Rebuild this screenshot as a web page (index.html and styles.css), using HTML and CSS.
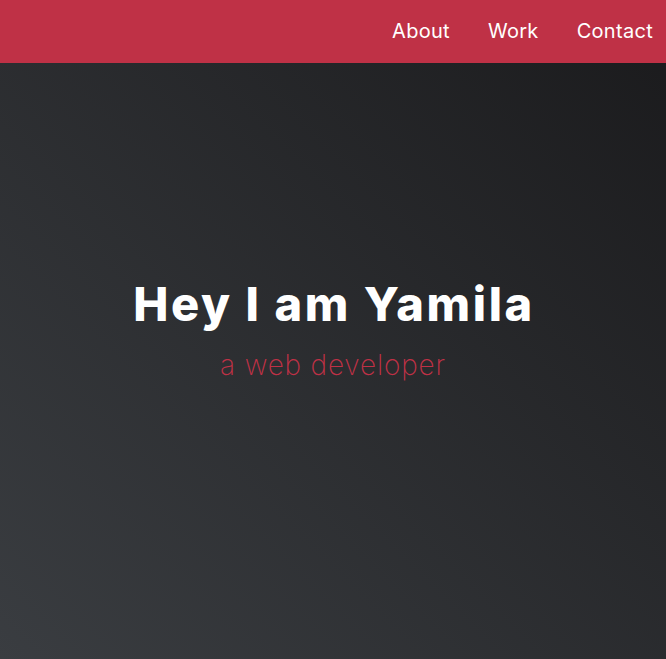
FILE: index.html
```html
<!DOCTYPE html>
<html lang="en">
<head>
<meta charset="utf-8">
<title>Yamila</title>
<link rel="stylesheet" href="styles.css">
</head>
<body>
<header class="site-header">
  <nav class="nav">
    <a class="nav-link" href="#about">About</a>
    <a class="nav-link" href="#work">Work</a>
    <a class="nav-link" href="#contact">Contact</a>
  </nav>
</header>
<main class="hero">
  <h1 class="hero-title">Hey I am Yamila</h1>
  <p class="hero-subtitle">a web developer</p>
</main>
</body>
</html>
```
FILE: styles.css
```css
* { box-sizing: border-box; }
html, body { margin: 0; padding: 0; height: 100%; }
body {
  font-family: Inter, "Open Sans", sans-serif;
  background: #1c1c1e;
  overflow: hidden;
}
.site-header {
  position: fixed;
  top: 0; left: 0; right: 0;
  height: 63px;
  background: #bf3146;
  display: flex;
  justify-content: flex-end;
  align-items: center;
  z-index: 2;
}
.nav {
  display: flex;
  gap: 38px;
  padding-right: 13px;
  padding-bottom: 2px;
}
.nav-link {
  color: #fff;
  text-decoration: none;
  font-size: 20px;
  font-weight: 400;
  letter-spacing: 0.3px;
}
.hero {
  height: 100vh;
  display: flex;
  flex-direction: column;
  align-items: center;
  justify-content: center;
  background: linear-gradient(to right top, #3a3d41, #1a1a1c);
  text-align: center;
}
.hero-title {
  margin: 0 0 14px;
  padding-left: 2px;
  color: #fff;
  font-size: 47px;
  font-weight: 800;
  line-height: 1.2;
  letter-spacing: 2.6px;
}
.hero-subtitle {
  margin: 0;
  color: #bf3146;
  font-size: 28px;
  font-weight: 200;
  line-height: 1.3;
  letter-spacing: 0.8px;
}
```
